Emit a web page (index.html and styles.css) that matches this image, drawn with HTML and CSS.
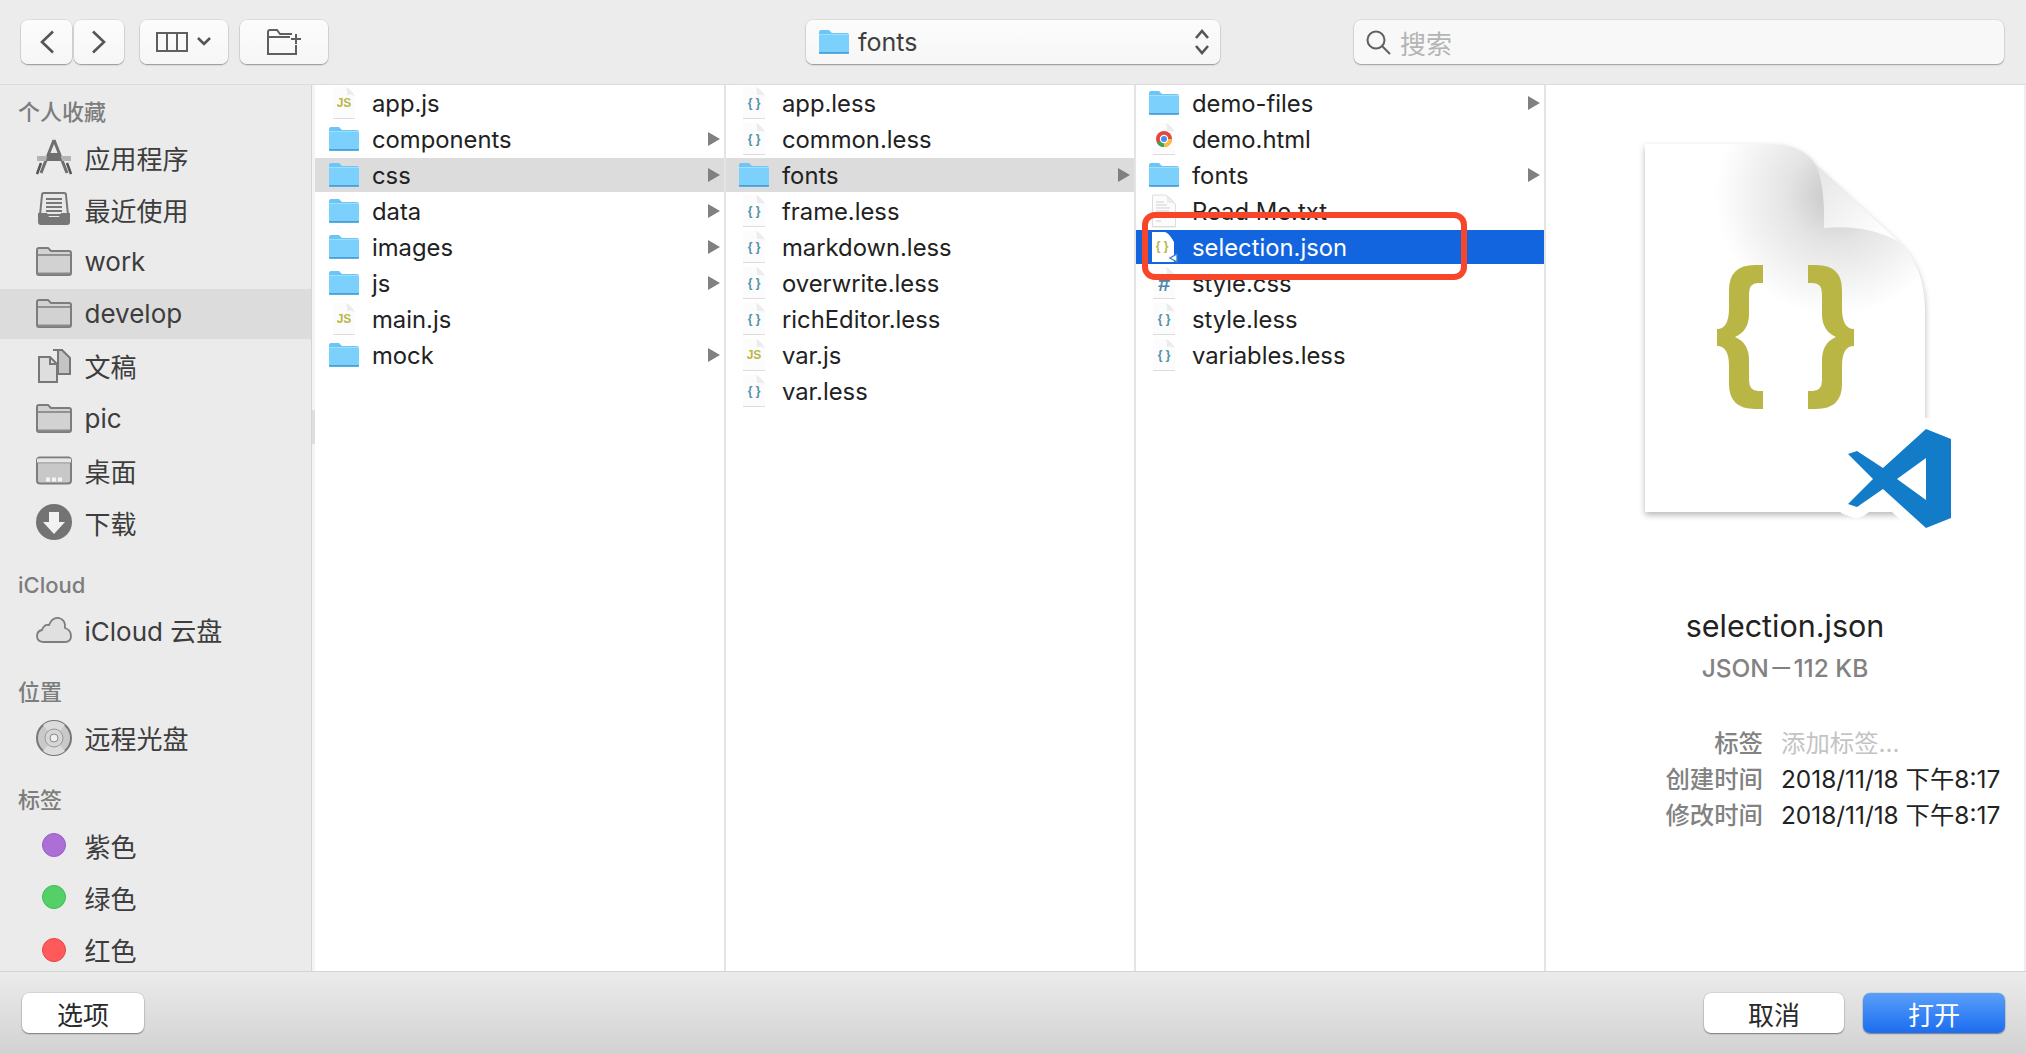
FILE: index.html
```html
<!DOCTYPE html>
<html lang="zh-CN">
<head>
    <meta charset="UTF-8">
    <title>打开</title>
    <link rel="stylesheet" href="styles.css">
</head>
<body>
    <svg class="sprite">
        <symbol id="folder-blue" viewBox="0 0 30 24">
            <path d="M0 2Q0 0 2 0H10L13 3H28Q30 3 30 5V22Q30 24 28 24H2Q0 24 0 22Z" fill="#6cc5f9"/>
            <path d="M0 5H30V22Q30 23 28 23H2Q0 23 0 22Z" fill="#7bd0fc"/>
            <path d="M0 22.8H30" stroke="#4a9fd6" stroke-width="1.6"/>
            <path d="M0 4.5H30" stroke="#9edffd"/>
        </symbol>
        <symbol id="folder-gray" viewBox="0 0 36 29">
            <path d="M1 3Q1 1 3 1H12L15 4H33Q35 4 35 6V26Q35 28 33 28H3Q1 28 1 26Z" fill="#d2d2d2" stroke="#7d7d7d" stroke-width="2"/>
            <path d="M1 8H35" stroke="#7d7d7d" stroke-width="1.5"/>
            <path d="M2 26.5H34" stroke="#8a8a8a" stroke-width="2"/>
        </symbol>
        <symbol id="doc" viewBox="0 0 30 34">
            <path d="M4 1H17L26 10V33H4Z" fill="#fcfcfc"/>
            <path d="M17 1Q22 3 26 10Q21 8 18 9Q18 4 17 1Z" fill="#ececec"/>
            <path d="M4 32.5H26" stroke="#dcdcdc"/>
        </symbol>
    </svg>

    <div class="dialog">
        <header class="toolbar">
            <button class="tool nav">
                <svg width="16" height="24" viewBox="0 0 16 24"><path d="M14 1.5L3 12L14 22.5" class="line"/></svg>
            </button>
            <button class="tool nav next">
                <svg width="16" height="24" viewBox="0 0 16 24"><path d="M2 1.5L13 12L2 22.5" class="line"/></svg>
            </button>
            <button class="tool view">
                <svg width="56" height="20" viewBox="0 0 56 20">
                    <rect x="1" y="1" width="30" height="18" class="line thin"/>
                    <path d="M11 1V19M21 1V19" class="line thin"/>
                    <path d="M42 6L48 12L54 6" class="line"/>
                </svg>
            </button>
            <button class="tool new-folder">
                <svg width="34" height="26" viewBox="0 0 34 26">
                    <path d="M1 3Q1 1 3 1H10L13 5H25M1 3V25H29V16M1 8H23" class="line thin"/>
                    <path d="M29 5V15M24 10H34" class="line thin"/>
                </svg>
            </button>
            <div class="tool path-select">
                <svg class="folder-small" viewBox="0 0 30 24"><use href="#folder-blue"/></svg>
                <span>fonts</span>
                <svg class="updown" width="16" height="26" viewBox="0 0 16 26"><path d="M2 9L8 2L14 9M2 17L8 24L14 17" class="line"/></svg>
            </div>
            <div class="search">
                <svg width="26" height="26" viewBox="0 0 26 26"><circle cx="11" cy="11" r="8.5" class="line thin"/><path d="M17 17L25 25" class="line thin"/></svg>
                <span>搜索</span>
            </div>
        </header>

        <main class="main">
            <nav class="sidebar">
                <h3 class="side-title">个人收藏</h3>
                <div class="side-item">
                    <svg class="side-icon" viewBox="0 0 36 36">
                        <path d="M18 1L5 34M18 1L31 34" fill="none" stroke="#6f6f6f" stroke-width="3"/>
                        <path d="M1 17H35V22H1Z" fill="#b4b4b4"/>
                        <path d="M12 14L24 14L26 22L10 22Z" fill="#6f6f6f"/>
                        <path d="M5 24L1 35M31 24L35 35" stroke="#555" stroke-width="2.5"/>
                    </svg>
                    <span>应用程序</span>
                </div>
                <div class="side-item">
                    <svg class="side-icon" viewBox="0 0 36 36">
                        <path d="M6 4Q6 2 8 2H28Q30 2 30 4L32 24H4Z" fill="#e8e8e8" stroke="#777" stroke-width="2"/>
                        <path d="M10 8H26M10 12H26M10 16H26M10 20H26" stroke="#777" stroke-width="2"/>
                        <path d="M2 22H11L13 26H23L25 22H34V31Q34 34 31 34H5Q2 34 2 31Z" fill="#777"/>
                    </svg>
                    <span>最近使用</span>
                </div>
                <div class="side-item">
                    <svg class="side-icon folder-gray" viewBox="0 0 36 29"><use href="#folder-gray"/></svg>
                    <span>work</span>
                </div>
                <div class="side-item active">
                    <svg class="side-icon folder-gray" viewBox="0 0 36 29"><use href="#folder-gray"/></svg>
                    <span>develop</span>
                </div>
                <div class="side-item">
                    <svg class="side-icon" viewBox="0 0 36 36">
                        <path d="M17 2H26L34 10V26H22V2" fill="#c4c4c4" stroke="#777" stroke-width="2"/>
                        <path d="M3 9H14L21 16V34H3Z" fill="#dedede" stroke="#777" stroke-width="2"/>
                        <path d="M14 9V16H21" fill="none" stroke="#777" stroke-width="2"/>
                    </svg>
                    <span>文稿</span>
                </div>
                <div class="side-item">
                    <svg class="side-icon folder-gray" viewBox="0 0 36 29"><use href="#folder-gray"/></svg>
                    <span>pic</span>
                </div>
                <div class="side-item">
                    <svg class="side-icon folder-gray" viewBox="0 0 36 28">
                        <rect x="1" y="1" width="34" height="26" rx="3" fill="#c8c8c8" stroke="#7d7d7d" stroke-width="2"/>
                        <path d="M1 6H35" stroke="#7d7d7d" stroke-width="1.5"/>
                        <path d="M1 6H35V2H1Z" fill="#e6e6e6"/>
                        <path d="M10 21H14V25H10ZM16 21H20V25H16ZM22 21H26V25H22Z" fill="#f3f3f3"/>
                    </svg>
                    <span>桌面</span>
                </div>
                <div class="side-item">
                    <svg class="side-icon" viewBox="0 0 36 36">
                        <circle cx="18" cy="18" r="18" fill="#737373"/>
                        <path d="M13 8H23V18H29L18 30L7 18H13Z" fill="#f2f2f2"/>
                    </svg>
                    <span>下载</span>
                </div>

                <h3 class="side-title gap">iCloud</h3>
                <div class="side-item">
                    <svg class="side-icon" viewBox="0 0 36 36">
                        <path d="M8 30Q1 30 1 24Q1 19 6 18Q8 12 13 13Q16 5 23 6Q30 8 29 16Q35 18 35 24Q35 30 29 30Z" fill="#e0e0e0" stroke="#7d7d7d" stroke-width="1.8"/>
                    </svg>
                    <span>iCloud 云盘</span>
                </div>

                <h3 class="side-title gap">位置</h3>
                <div class="side-item">
                    <svg class="side-icon" viewBox="0 0 36 36">
                        <circle cx="18" cy="18" r="17" fill="#c9c9c9" stroke="#777" stroke-width="2"/>
                        <path d="M18 18L7 5A17 17 0 0 1 29 5ZM18 18L29 31A17 17 0 0 1 7 31Z" fill="#dcdcdc"/>
                        <circle cx="18" cy="18" r="9" fill="#d6d6d6" stroke="#999"/>
                        <circle cx="18" cy="18" r="4" fill="#efefef" stroke="#888"/>
                    </svg>
                    <span>远程光盘</span>
                </div>

                <h3 class="side-title gap">标签</h3>
                <div class="side-item"><i class="tag purple"></i><span>紫色</span></div>
                <div class="side-item"><i class="tag green"></i><span>绿色</span></div>
                <div class="side-item"><i class="tag red"></i><span>红色</span></div>
            </nav>
            <div class="splitter"><div class="knob"></div></div>

            <section class="col first">
                <div class="row"><svg class="ico" viewBox="0 0 30 34"><use href="#doc"/><text x="15" y="21" class="ico-js">JS</text></svg><span>app.js</span></div>
                <div class="row"><svg class="ico" viewBox="0 0 30 24"><use href="#folder-blue"/></svg><span>components</span><i class="arrow"></i></div>
                <div class="row open"><svg class="ico" viewBox="0 0 30 24"><use href="#folder-blue"/></svg><span>css</span><i class="arrow"></i></div>
                <div class="row"><svg class="ico" viewBox="0 0 30 24"><use href="#folder-blue"/></svg><span>data</span><i class="arrow"></i></div>
                <div class="row"><svg class="ico" viewBox="0 0 30 24"><use href="#folder-blue"/></svg><span>images</span><i class="arrow"></i></div>
                <div class="row"><svg class="ico" viewBox="0 0 30 24"><use href="#folder-blue"/></svg><span>js</span><i class="arrow"></i></div>
                <div class="row"><svg class="ico" viewBox="0 0 30 34"><use href="#doc"/><text x="15" y="21" class="ico-js">JS</text></svg><span>main.js</span></div>
                <div class="row"><svg class="ico" viewBox="0 0 30 24"><use href="#folder-blue"/></svg><span>mock</span><i class="arrow"></i></div>
            </section>

            <section class="col">
                <div class="row"><svg class="ico" viewBox="0 0 30 34"><use href="#doc"/><text x="15" y="21" class="ico-brace">{ }</text></svg><span>app.less</span></div>
                <div class="row"><svg class="ico" viewBox="0 0 30 34"><use href="#doc"/><text x="15" y="21" class="ico-brace">{ }</text></svg><span>common.less</span></div>
                <div class="row open"><svg class="ico" viewBox="0 0 30 24"><use href="#folder-blue"/></svg><span>fonts</span><i class="arrow"></i></div>
                <div class="row"><svg class="ico" viewBox="0 0 30 34"><use href="#doc"/><text x="15" y="21" class="ico-brace">{ }</text></svg><span>frame.less</span></div>
                <div class="row"><svg class="ico" viewBox="0 0 30 34"><use href="#doc"/><text x="15" y="21" class="ico-brace">{ }</text></svg><span>markdown.less</span></div>
                <div class="row"><svg class="ico" viewBox="0 0 30 34"><use href="#doc"/><text x="15" y="21" class="ico-brace">{ }</text></svg><span>overwrite.less</span></div>
                <div class="row"><svg class="ico" viewBox="0 0 30 34"><use href="#doc"/><text x="15" y="21" class="ico-brace">{ }</text></svg><span>richEditor.less</span></div>
                <div class="row"><svg class="ico" viewBox="0 0 30 34"><use href="#doc"/><text x="15" y="21" class="ico-js">JS</text></svg><span>var.js</span></div>
                <div class="row"><svg class="ico" viewBox="0 0 30 34"><use href="#doc"/><text x="15" y="21" class="ico-brace">{ }</text></svg><span>var.less</span></div>
            </section>

            <section class="col">
                <div class="row"><svg class="ico" viewBox="0 0 30 24"><use href="#folder-blue"/></svg><span>demo-files</span><i class="arrow"></i></div>
                <div class="row">
                    <svg class="ico" viewBox="0 0 30 34">
                        <use href="#doc"/>
                        <circle cx="15" cy="17" r="8" fill="#e2483d"/>
                        <path d="M15 17L8 21A8 8 0 0 0 15 25Z" fill="#3da556"/>
                        <path d="M15 17V25A8 8 0 0 0 23 17Z" fill="#f5c33b"/>
                        <circle cx="15" cy="17" r="3.6" fill="#4a8bf0" stroke="#fff" stroke-width="1.2"/>
                    </svg>
                    <span>demo.html</span>
                </div>
                <div class="row"><svg class="ico" viewBox="0 0 30 24"><use href="#folder-blue"/></svg><span>fonts</span><i class="arrow"></i></div>
                <div class="row">
                    <svg class="ico" viewBox="0 0 30 34">
                        <use href="#doc"/>
                        <path d="M3.5 33V1H17L26.5 10V33Z" fill="none" stroke="#dedede"/>
                        <path d="M7 8H15M7 11H18M7 14H21M7 17H20M7 20H14M7 27H12" stroke="#cfcfcf"/>
                    </svg>
                    <span>Read Me.txt</span>
                </div>
                <div class="row selected">
                    <svg class="ico" viewBox="0 0 30 34">
                        <path d="M3 2H16Q20 3 25 12V32H3Z" fill="#fff"/>
                        <text x="13" y="20" class="ico-brace olive">{ }</text>
                        <path d="M28 24L21 28L28 32Z" fill="#fff" stroke="#3a7fd0" stroke-width="1.4"/>
                    </svg>
                    <span>selection.json</span>
                </div>
                <div class="row"><svg class="ico" viewBox="0 0 30 34"><use href="#doc"/><text x="15" y="25" class="ico-hash">#</text></svg><span>style.css</span></div>
                <div class="row"><svg class="ico" viewBox="0 0 30 34"><use href="#doc"/><text x="15" y="21" class="ico-brace">{ }</text></svg><span>style.less</span></div>
                <div class="row"><svg class="ico" viewBox="0 0 30 34"><use href="#doc"/><text x="15" y="21" class="ico-brace">{ }</text></svg><span>variables.less</span></div>
            </section>

            <aside class="preview">
                <svg class="preview-icon" width="340" height="390" viewBox="1615 140 340 390">
                    <defs>
                        <radialGradient id="curl" gradientUnits="userSpaceOnUse" cx="1835" cy="195" r="120">
                            <stop offset="0" stop-color="#c6c6c6"/>
                            <stop offset="0.4" stop-color="#e4e4e4"/>
                            <stop offset="1" stop-color="#fff"/>
                        </radialGradient>
                        <linearGradient id="flap" gradientUnits="userSpaceOnUse" x1="1820" y1="170" x2="1880" y2="235">
                            <stop offset="0" stop-color="#e6e6e6"/>
                            <stop offset="1" stop-color="#fefefe"/>
                        </linearGradient>
                        <clipPath id="page-clip"><path d="M1645 144H1770Q1802 144 1816 165L1899 242Q1925 268 1925 310V512H1645Z"/></clipPath>
                    </defs>
                    <path class="page" d="M1645 144H1770Q1802 144 1816 165L1899 242Q1925 268 1925 310V512H1645Z" fill="#fff"/>
                    <g clip-path="url(#page-clip)"><circle cx="1835" cy="195" r="120" fill="url(#curl)"/></g>
                    <path d="M1816 165Q1825 185 1824 228Q1868 224 1899 242Z" fill="url(#flap)"/>
                    <g id="brace" fill="#b9b646"><path d="M1763 265H1755Q1729 265 1729 290V308Q1729 329 1717 329V346Q1729 346 1729 366V384Q1729 409 1755 409H1763V391H1758Q1749 391 1749 380V360Q1749 343 1735 337Q1749 331 1749 314V294Q1749 283 1758 283H1763Z"/></g>
                    <use href="#brace" transform="matrix(-1 0 0 1 3571 0)"/>
                    <path d="M1926 429L1951 439V518L1926 528L1883 489L1857 507L1848 504L1873 479L1848 454L1857 451L1883 468Z" fill="#fff" stroke="#fff" stroke-width="22" stroke-linejoin="round"/>
                    <path fill-rule="evenodd" d="M1926 429L1951 439V518L1926 528L1883 489L1857 507L1848 504L1873 479L1848 454L1857 451L1883 468ZM1926 458L1897 479L1926 500Z" fill="#127cc8"/>
                </svg>
                <div class="preview-name">selection.json</div>
                <div class="preview-kind">JSON－112 KB</div>
                <dl class="meta">
                    <dt>标签</dt><dd class="muted">添加标签...</dd>
                    <dt>创建时间</dt><dd>2018/11/18 下午8:17</dd>
                    <dt>修改时间</dt><dd>2018/11/18 下午8:17</dd>
                </dl>
            </aside>
        </main>

        <footer class="footer">
            <button class="btn">选项</button>
            <button class="btn cancel">取消</button>
            <button class="btn primary">打开</button>
        </footer>

        <div class="highlight"></div>
    </div>
</body>
</html>
```

FILE: styles.css
```css
* {
    box-sizing: border-box;
}
body {
    margin: 0;
    font-family: Inter, "Noto Sans CJK SC", sans-serif;
    background: #ececec;
}
.sprite {
    display: none;
}
.dialog {
    position: relative;
    width: 2026px;
    height: 1054px;
    overflow: hidden;
    display: flex;
    flex-direction: column;
}

/* toolbar */
.toolbar {
    flex: none;
    height: 85px;
    padding: 20px 22px 0 21px;
    display: flex;
    align-items: flex-start;
    background: #ececec;
    border-bottom: 1px solid #dcdcdc;
}
.tool {
    height: 44px;
    padding: 0;
    border: 0;
    border-radius: 7px;
    background: linear-gradient(#fcfcfc, #f6f6f6);
    box-shadow: 0 1px 1.5px rgba(0,0,0,0.35), 0 0 0 0.5px rgba(0,0,0,0.1);
    display: flex;
    align-items: center;
    justify-content: center;
}
.line {
    fill: none;
    stroke: #555;
    stroke-width: 2.6;
}
.line.thin {
    stroke-width: 2;
    stroke: #5f5f5f;
}
.nav {
    width: 51px;
}
.next {
    width: 50px;
    margin-left: 2px;
}
.view {
    width: 88px;
    margin-left: 16px;
}
.new-folder {
    width: 88px;
    margin-left: 12px;
}
.path-select {
    width: 414px;
    margin-left: 478px;
    padding: 0 10px 0 13px;
    justify-content: flex-start;
    font-size: 25px;
    color: #3f3f3f;
}
.folder-small {
    width: 30px;
    height: 24px;
    margin-right: 9px;
}
.updown {
    margin-left: auto;
}
.search {
    flex: 1;
    height: 44px;
    margin-left: 134px;
    padding-left: 11px;
    display: flex;
    align-items: center;
    gap: 9px;
    border-radius: 7px;
    background: #f8f8f8;
    box-shadow: 0 1px 1.5px rgba(0,0,0,0.3), 0 0 0 0.5px rgba(0,0,0,0.1);
    font-size: 26px;
    color: #b4b4b4;
}

/* main area */
.main {
    flex: none;
    height: 886px;
    display: flex;
    background: #fff;
}
.sidebar {
    flex: none;
    width: 311px;
    padding-top: 6px;
    overflow: hidden;
    background: #ebebeb;
}
.side-title {
    margin: 0;
    height: 40px;
    padding: 1px 0 0 18px;
    font-size: 22px;
    line-height: 40px;
    font-weight: 500;
    color: #7d7d7d;
}
.side-title.gap {
    margin-top: 15.4px;
}
.side-item {
    height: 52.2px;
    padding-left: 36px;
    display: flex;
    align-items: center;
    gap: 12.5px;
    font-size: 26px;
    color: #3d3d3d;
}
.side-item.active {
    background: #dcdcdc;
    background-clip: padding-box;
    border-block: 1px solid transparent;
}
.side-icon {
    flex: none;
    width: 36px;
    height: 36px;
}
.folder-gray {
    height: 29px;
}
.tag {
    flex: none;
    width: 24px;
    height: 24px;
    margin: 0 6px;
    border-radius: 50%;
    border: 1.5px solid;
}
.purple {
    background: #ab6fd6;
    border-color: #9b5cc8;
}
.green {
    background: #55d068;
    border-color: #3dbc51;
}
.red {
    background: #ff5a5a;
    border-color: #e64444;
}
.splitter {
    flex: none;
    width: 4px;
    background: #f4f4f4;
    border-left: 1.5px solid #d4d4d4;
}
.knob {
    height: 34px;
    margin-top: 325px;
    background: #dedede;
}

/* file columns */
.col {
    flex: none;
    width: 410px;
    padding-top: 1px;
    border-right: 2px solid #e4e4e4;
    font-size: 23.8px;
    color: #222;
}
.col.first {
    width: 411px;
}
.row {
    height: 34px;
    margin-bottom: 2px;
    padding-left: 13px;
    display: flex;
    align-items: center;
    gap: 13px;
    white-space: nowrap;
}
.first .row {
    padding-left: 14px;
}
.row.open {
    background: #dcdcdc;
}
.row.selected {
    background: #1265de;
    color: #fff;
}
.ico {
    flex: none;
    width: 30px;
    height: 34px;
    overflow: visible;
}
.ico-js {
    font: 700 12px "Liberation Sans", sans-serif;
    fill: #b9b646;
    text-anchor: middle;
}
.ico-brace {
    font: 700 12px "Liberation Sans", sans-serif;
    fill: #4f90a8;
    text-anchor: middle;
}
.ico-brace.olive {
    fill: #b9b646;
}
.ico-hash {
    font: 700 22px "Liberation Sans", sans-serif;
    fill: #4a86a6;
    text-anchor: middle;
}
.arrow {
    width: 0;
    height: 0;
    margin-left: auto;
    margin-right: 4px;
    border-left: 12px solid #808080;
    border-top: 7px solid transparent;
    border-bottom: 7px solid transparent;
}

/* preview */
.preview {
    flex: 1;
    min-width: 0;
    padding-top: 55px;
    display: flex;
    flex-direction: column;
    align-items: center;
    border-right: 2px solid #eee;
}
.preview-icon {
    flex: none;
}
.page {
    filter: drop-shadow(0 3px 3px rgba(0,0,0,0.28));
}
.preview-name {
    margin-top: 78px;
    font-size: 30.5px;
    line-height: 36px;
    color: #222;
}
.preview-kind {
    margin-top: 7px;
    font-size: 24.5px;
    line-height: 34px;
    font-weight: 500;
    color: #828282;
}
.meta {
    align-self: stretch;
    margin: 40px 0 0;
    display: grid;
    grid-template-columns: 217px auto;
    column-gap: 18px;
    font-size: 24.4px;
    line-height: 36px;
}
.meta dt {
    text-align: right;
    font-weight: 500;
    color: #828282;
}
.meta dd {
    margin: 0;
    color: #222;
    white-space: nowrap;
}
.meta dd.muted {
    color: #c4c4c4;
}

/* footer */
.footer {
    flex: 1;
    padding: 21px 21px 0 22px;
    display: flex;
    align-items: flex-start;
    background: linear-gradient(#ebebeb, #d2d2d2);
    border-top: 1px solid #d4d4d4;
}
.btn {
    width: 122px;
    height: 40px;
    padding: 0;
    border: 0;
    border-radius: 7px;
    background: #fff;
    box-shadow: 0 1px 1.5px rgba(0,0,0,0.4), 0 0 0 0.5px rgba(0,0,0,0.12);
    font: 26px "Noto Sans CJK SC", sans-serif;
    color: #2a2a2a;
}
.cancel {
    width: 140px;
    margin-left: auto;
}
.primary {
    width: 142px;
    margin-left: 19px;
    background: linear-gradient(#5a9ff9, #1b6df0);
    color: #fff;
}

/* red annotation drawn over the screenshot */
.highlight {
    position: absolute;
    left: 1142px;
    top: 212px;
    width: 325px;
    height: 68px;
    border: 6px solid #f8462a;
    border-radius: 13px;
}
```
